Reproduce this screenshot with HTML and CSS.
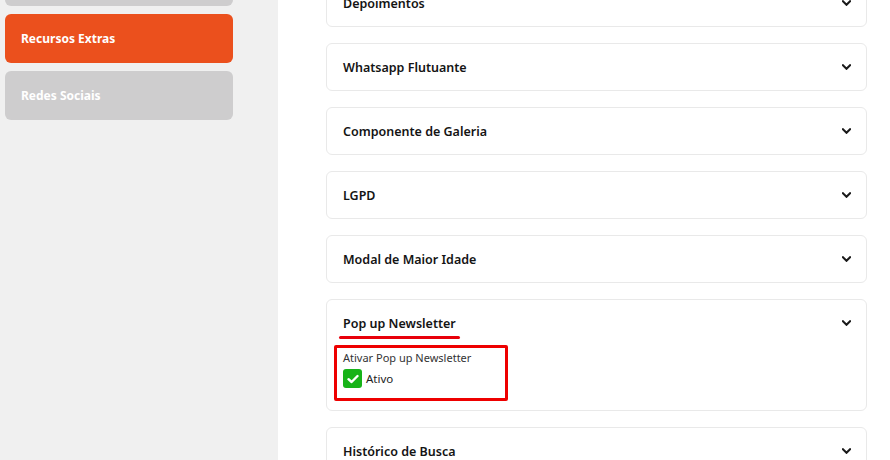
FILE: index.html
```html
<!DOCTYPE html>
<html lang="pt-BR">
<head>
<meta charset="utf-8">
<title>Recursos Extras</title>
<link rel="stylesheet" href="styles.css">
</head>
<body>
<div class="layout">
  <aside class="sidebar">
    <div class="side-list">
      <div class="side-item">Aparência</div>
      <div class="side-item active">Recursos Extras</div>
      <div class="side-item">Redes Sociais</div>
    </div>
  </aside>
  <main class="main">
    <div class="cards">
      <section class="card"><div class="card-head"><span class="card-title">Depoimentos</span><svg class="chev" viewBox="0 0 10 6"><polyline points="1,1 5,5 9,1"/></svg></div></section>
      <section class="card"><div class="card-head"><span class="card-title">Whatsapp Flutuante</span><svg class="chev" viewBox="0 0 10 6"><polyline points="1,1 5,5 9,1"/></svg></div></section>
      <section class="card"><div class="card-head"><span class="card-title">Componente de Galeria</span><svg class="chev" viewBox="0 0 10 6"><polyline points="1,1 5,5 9,1"/></svg></div></section>
      <section class="card"><div class="card-head"><span class="card-title">LGPD</span><svg class="chev" viewBox="0 0 10 6"><polyline points="1,1 5,5 9,1"/></svg></div></section>
      <section class="card"><div class="card-head"><span class="card-title">Modal de Maior Idade</span><svg class="chev" viewBox="0 0 10 6"><polyline points="1,1 5,5 9,1"/></svg></div></section>
      <section class="card open">
        <div class="card-head"><span class="card-title marked">Pop up Newsletter</span><svg class="chev" viewBox="0 0 10 6"><polyline points="1,1 5,5 9,1"/></svg></div>
        <div class="card-body">
          <div class="highlight">
            <div class="field-label">Ativar Pop up Newsletter</div>
            <label class="check-row">
              <span class="checkbox"><svg viewBox="0 0 12 10"><polyline points="1.5,5.2 4.6,8 10.5,2"/></svg></span>
              <span class="check-text">Ativo</span>
            </label>
          </div>
        </div>
      </section>
      <section class="card"><div class="card-head"><span class="card-title">Histórico de Busca</span><svg class="chev" viewBox="0 0 10 6"><polyline points="1,1 5,5 9,1"/></svg></div></section>
    </div>
  </main>
</div>
</body>
</html>
```

FILE: styles.css
```css
html, body {
  margin: 0;
  padding: 0;
  height: 100%;
  overflow: hidden;
  font-family: "Noto Sans", "Open Sans", Arial, sans-serif;
  background: #ffffff;
}

.layout {
  display: flex;
  height: 460px;
}

.sidebar {
  width: 278px;
  flex: 0 0 278px;
  background: #f0f0f0;
  padding-left: 5px;
  box-sizing: border-box;
}

.side-list {
  margin-top: -43px;
  display: flex;
  flex-direction: column;
  gap: 8px;
}

.side-item {
  width: 228px;
  height: 49px;
  box-sizing: border-box;
  border-radius: 6px;
  background: #cecdce;
  color: #ffffff;
  font-size: 12px;
  font-weight: 700;
  display: flex;
  align-items: center;
  padding: 0 0 1px 16px;
}

.side-item.active {
  background: #eb501d;
}

.main {
  flex: 1;
  padding-left: 48px;
  padding-right: 23px;
}

.cards {
  margin-top: -21px;
  display: flex;
  flex-direction: column;
  gap: 16px;
}

.card {
  border: 1px solid #e9e9e9;
  border-radius: 6px;
  background: #fff;
}

.card-head {
  height: 46px;
  display: flex;
  align-items: center;
  justify-content: space-between;
  padding: 0 15px 0 16px;
}

.card-title {
  font-size: 12.5px;
  font-weight: 600;
  color: #141414;
  position: relative;
}

.card-title.marked::after {
  content: "";
  position: absolute;
  left: -4px;
  right: -4px;
  top: 21px;
  height: 3px;
  border-radius: 2px;
  background: #e8000a;
}

.chev {
  width: 9px;
  height: 6px;
  fill: none;
  stroke: #1a1a1a;
  stroke-width: 2.3;
  stroke-linecap: square;
}

.card-body {
  margin-top: -1px;
  padding: 0 0 9px 7px;
}

.highlight {
  width: 174px;
  height: 56px;
  box-sizing: border-box;
  border: 3px solid #ee0000;
  border-radius: 2px;
  padding: 2px 0 0 6px;
}

.field-label {
  font-size: 11px;
  line-height: 16px;
  color: #333333;
}

.check-row {
  margin-top: 3px;
  display: flex;
  align-items: center;
  gap: 4px;
}

.checkbox {
  width: 19px;
  height: 19px;
  border-radius: 3px;
  background: #17b318;
  display: flex;
  align-items: center;
  justify-content: center;
}

.checkbox svg {
  width: 12px;
  height: 10px;
  fill: none;
  stroke: #ffffff;
  stroke-width: 2.4;
  stroke-linecap: round;
  stroke-linejoin: round;
}

.check-text {
  font-size: 11.5px;
  color: #222222;
}
```
